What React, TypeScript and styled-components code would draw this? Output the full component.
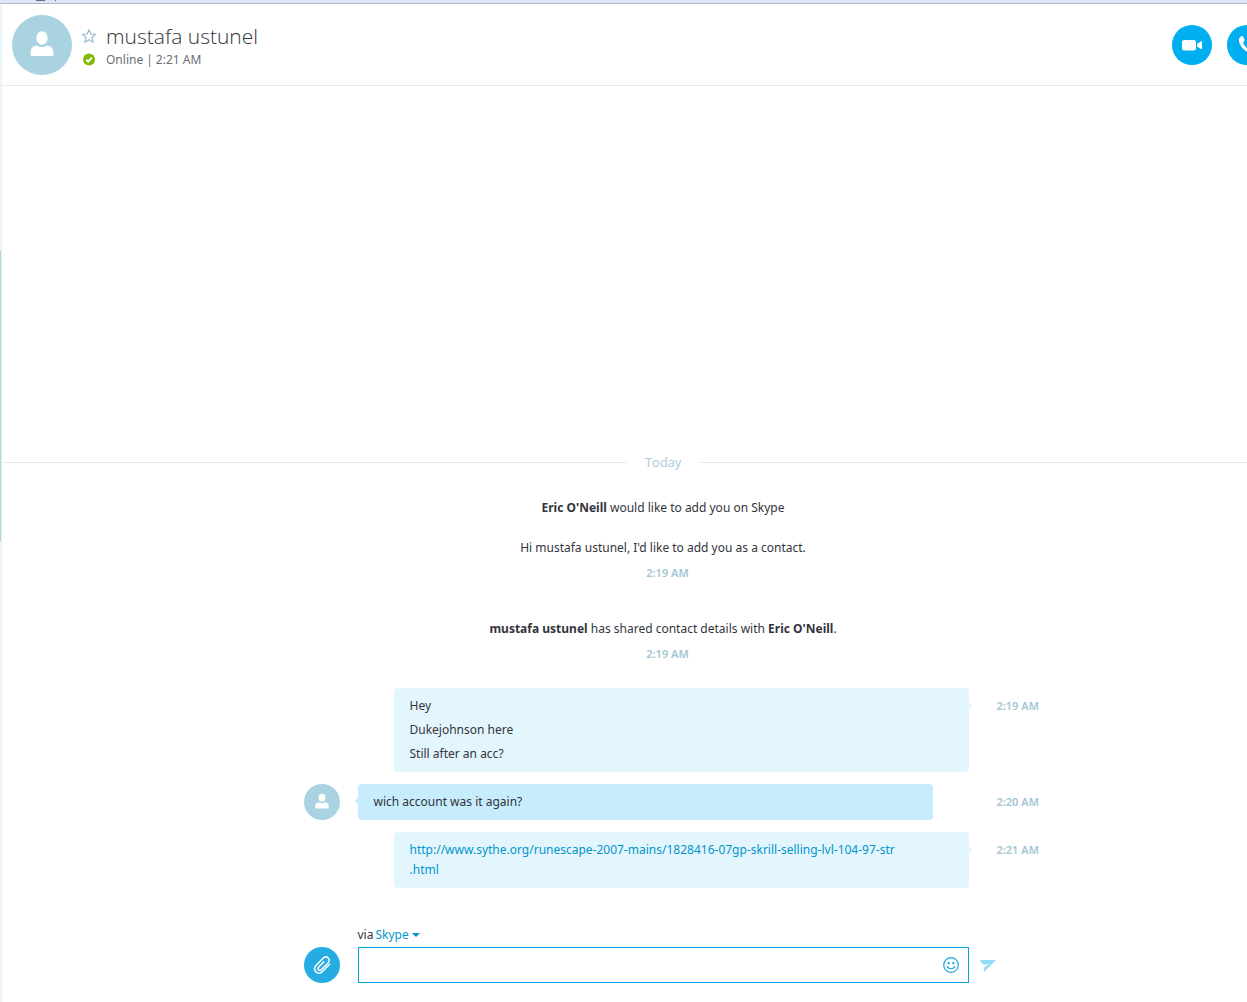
import React from "react";
import styled, { createGlobalStyle } from "styled-components";

const GlobalStyle = createGlobalStyle`
  *, *::before, *::after { box-sizing: border-box; }
  body {
    margin: 0;
    background: #fff;
    color: #34343c;
    font-family: "Noto Sans", "Open Sans", sans-serif;
    font-size: 12px;
    line-height: 20px;
    overflow: hidden;
  }
  button, input { font: inherit; color: inherit; }
  p { margin: 0; }
`;

const Screen = styled.div`
  display: flex;
  flex-direction: column;
  height: 100vh;
  overflow: hidden;
`;

const WindowEdge = styled.div`
  flex: none;
  display: flex;
  align-items: flex-start;
  gap: 10px;
  height: 4px;
  padding-left: 36px;
  background: #dfe5f7;
  border-bottom: 1px solid #b4b8cc;
`;

const EdgeMark = styled.span<{ $width: number }>`
  width: ${(p) => p.$width}px;
  height: 1px;
  background: #6b6b75;
`;

const Body = styled.div`
  flex: 1;
  display: flex;
  min-height: 0;
  padding-top: 1px;
`;

const Rail = styled.div`
  flex: none;
  display: flex;
  flex-direction: column;
  width: 2px;
  padding-top: 246px;
  background: #eef9fd;
  border-right: 1px solid #e2eef2;
`;

const RailThumb = styled.div`
  height: 290px;
  background: #b5d3df;
`;

const Panel = styled.main`
  flex: none;
  display: flex;
  flex-direction: column;
  width: calc(100% + 75px);
`;

const Header = styled.header`
  flex: none;
  display: flex;
  align-items: center;
  height: 81px;
  padding: 0 57px 0 10px;
  border-bottom: 1px solid #e6ecee;
`;

const Avatar = styled.div<{ $size: number }>`
  flex: none;
  width: ${(p) => p.$size}px;
  height: ${(p) => p.$size}px;
  border-radius: 50%;
  background: #a9d3e1;
  svg { display: block; width: 100%; height: 100%; }
`;

const Identity = styled.div`
  flex: 1;
  display: grid;
  grid-template-columns: 14px 1fr;
  column-gap: 10px;
  align-items: center;
  margin-left: 10px;
  padding-top: 2px;
`;

const StarButton = styled.button`
  padding: 0;
  border: 0;
  background: none;
  svg { display: block; }
`;

const Name = styled.h1`
  margin: 0;
  font-family: "Open Sans", "Noto Sans", sans-serif;
  font-size: 21px;
  font-weight: 300;
  line-height: 28px;
`;

const Status = styled.p`
  display: flex;
  gap: 3px;
  color: #6e6e76;
`;

const Calls = styled.div`
  display: flex;
  gap: 15px;
`;

const RoundButton = styled.button<{ $size: number; $color: string }>`
  flex: none;
  width: ${(p) => p.$size}px;
  height: ${(p) => p.$size}px;
  padding: 0;
  border: 0;
  border-radius: 50%;
  background: ${(p) => p.$color};
  svg { display: block; width: 100%; height: 100%; }
`;

const History = styled.section`
  flex: 1;
  display: flex;
  flex-direction: column;
  justify-content: flex-end;
  min-height: 0;
`;

const DayDivider = styled.div`
  display: flex;
  align-items: center;
  gap: 18px;
  margin-bottom: 26px;
  color: #a9cbdb;
  font-family: "Open Sans", "Noto Sans", sans-serif;
  font-size: 13px;
  &::before, &::after {
    content: "";
    flex: 1;
    height: 1px;
    background: #e6ecee;
  }
`;

const Notice = styled.div`
  display: flex;
  flex-direction: column;
  align-items: center;
  margin-bottom: 36px;
`;

const NoticeText = styled.p`
  & + & { margin-top: 20px; }
`;

const Time = styled.time`
  color: #a3c5d4;
  font-size: 11px;
  font-weight: 600;
`;

const NoticeTime = styled(Time)`
  margin-top: 5px;
  padding-left: 9px;
`;

const Messages = styled.div`
  display: grid;
  gap: 12px;
  margin: -12px 0 37px;
`;

const Row = styled.div`
  display: grid;
  grid-template-columns: 1fr 611px 1fr;
`;

const Left = styled.div`
  display: flex;
  justify-content: flex-end;
  padding-right: 18px;
`;

const Right = styled.div`
  padding: 8px 0 0 28px;
`;

const Bubble = styled.div<{ $mine?: boolean }>`
  position: relative;
  width: 575px;
  margin-left: ${(p) => (p.$mine ? "36px" : "0")};
  padding: 6px 48px 6px 16px;
  border-radius: 4px;
  background: ${(p) => (p.$mine ? "#e4f6fd" : "#c7ecfb")};
  &::after {
    content: "";
    position: absolute;
    top: 14px;
    ${(p) => (p.$mine ? "right" : "left")}: -2px;
    width: 6px;
    height: 6px;
    background: inherit;
    transform: rotate(45deg);
  }
`;

const Line = styled.p`
  padding: 2px 0;
`;

const Link = styled.a`
  color: #0095cc;
  text-decoration: none;
`;

const Composer = styled.form`
  flex: none;
  padding-bottom: 19px;
`;

const Via = styled.div`
  height: 22px;
  display: flex;
  align-items: flex-start;
  gap: 2px;
`;

const ViaButton = styled.button`
  display: flex;
  align-items: center;
  gap: 3px;
  padding: 0;
  border: 0;
  background: none;
  color: #0095cc;
`;

const Field = styled.div`
  display: flex;
  align-items: center;
  height: 36px;
  padding-right: 9px;
  border: 1px solid #00a4e4;
`;

const TextBox = styled.input`
  flex: 1;
  height: 100%;
  padding: 0 15px;
  border: 0;
  outline: 0;
  background: none;
`;

const IconButton = styled.button`
  padding: 0;
  border: 0;
  background: none;
  svg { display: block; }
`;

const Send = styled.div`
  display: flex;
  align-items: center;
  padding: 2px 0 0 11px;
`;

const Person = () => (
  <svg viewBox="0 0 60 60" fill="#fff" aria-hidden="true">
    <ellipse cx="30" cy="23" rx="5.7" ry="6.700" />
    <path d="M18.700 41v-3.600c0-4.200 2.200-6.400 6.200-6.900 3.200 2 7 2 10.200 0 4 .5 6.200 2.700 6.200 6.900v3.600z" />
  </svg>
);

const Star = () => (
  <svg width="14" height="14" viewBox="0 0 14 14" fill="none" stroke="#94bfd1" strokeWidth="1.200" strokeLinejoin="round" aria-hidden="true">
    <path d="M7 .7l1.800 4.300 4.700.4-3.600 3.100 1.200 4.700L7 10.700l-4.100 2.500 1.200-4.700L.5 5.400 5.200 5z" />
  </svg>
);

const Online = () => (
  <svg width="14" height="14" viewBox="0 0 14 14" aria-hidden="true">
    <circle cx="7" cy="6.500" r="6" fill="#7fba00" />
    <path d="M4.200 6.700l2 1.900 3.700-4" fill="none" stroke="#fff" strokeWidth="2" />
  </svg>
);

const Video = () => (
  <svg viewBox="0 0 40 40" fill="#fff" aria-hidden="true">
    <rect x="10" y="15" width="14" height="10.500" rx="2" />
    <path d="M25 19l4-2.700q1-.4 1 .6v6.600q0 1-1 .6l-4-2.700z" />
  </svg>
);

const Phone = () => (
  <svg viewBox="0 0 40 40" fill="#fff" aria-hidden="true">
    <path d="M12.200 13.500c.7-1.800 2.500-3 3.500-2.300.8.6 1.700 2.700 1.900 3.900.2 1.300-1.400 1.800-1.300 3 .2 1.900 3.800 5.700 5.800 5.900 1.200.1 1.800-1.400 3-1.200 1.200.2 3.300 1.200 3.800 2 .7 1-.6 2.800-2.400 3.400-6 2-16.300-8.500-14.300-14.700z" />
  </svg>
);

const Clip = () => (
  <svg viewBox="0 0 36 36" fill="none" stroke="#fff" strokeWidth="1.500" strokeLinecap="round" aria-hidden="true">
    <path d="M25.700 17.300l-7 7c-2 2-4.800 2.400-6.700.7-2-1.900-1.900-4.500 0-6.500l6.800-7c1.700-1.700 3.900-2 5.400-.5s1.200 3.500-.4 5.200l-6.300 6.300c-1 1-2.200 1.100-3 .4s-.7-1.900.2-2.800l5.200-5.300" />
  </svg>
);

const Smile = () => (
  <svg width="16" height="16" viewBox="0 0 16 16" fill="none" stroke="#1ba5dd" strokeWidth="1.200" aria-hidden="true">
    <circle cx="8" cy="8" r="7.300" />
    <path d="M4.200 9.200c.7 3.400 6.900 3.400 7.600 0" />
    <path d="M5.600 5v2.200M10.400 5v2.200" strokeWidth="1.900" />
  </svg>
);

const Plane = () => (
  <svg width="16" height="12" viewBox="0 0 16 12" fill="#94dcf8" aria-hidden="true">
    <path d="M0 0h16L4 12V7.500L9 3.800 4 4.800 1 2.500z" />
  </svg>
);

const Caret = () => (
  <svg width="8" height="4" viewBox="0 0 8 4" fill="#0095cc" aria-hidden="true">
    <path d="M0 0h8L4 4z" />
  </svg>
);

export default function App() {
  return (
    <Screen>
      <GlobalStyle />
      <WindowEdge>
        <EdgeMark $width={9} />
        <EdgeMark $width={1} />
      </WindowEdge>
      <Body>
        <Rail>
          <RailThumb />
        </Rail>
        <Panel>
          <Header>
            <Avatar $size={60}>
              <Person />
            </Avatar>
            <Identity>
              <StarButton aria-label="Add to favorites">
                <Star />
              </StarButton>
              <Name>mustafa ustunel</Name>
              <Online />
              <Status>
                <span>Online</span>
                <span>|</span>
                <span>2:21 AM</span>
              </Status>
            </Identity>
            <Calls>
              <RoundButton $size={40} $color="#00aff0" aria-label="Video call">
                <Video />
              </RoundButton>
              <RoundButton $size={40} $color="#00aff0" aria-label="Call">
                <Phone />
              </RoundButton>
            </Calls>
          </Header>

          <History>
            <DayDivider>Today</DayDivider>
            <Notice>
              <NoticeText>
                <b>Eric O'Neill</b> would like to add you on Skype
              </NoticeText>
              <NoticeText>Hi mustafa ustunel, I'd like to add you as a contact.</NoticeText>
              <NoticeTime>2:19 AM</NoticeTime>
            </Notice>
            <Notice>
              <NoticeText>
                <b>mustafa ustunel</b> has shared contact details with <b>Eric O'Neill</b>.
              </NoticeText>
              <NoticeTime>2:19 AM</NoticeTime>
            </Notice>
            <Messages>
              <Row>
                <Left />
                <Bubble $mine>
                  <Line>Hey</Line>
                  <Line>Dukejohnson here</Line>
                  <Line>Still after an acc?</Line>
                </Bubble>
                <Right>
                  <Time>2:19 AM</Time>
                </Right>
              </Row>
              <Row>
                <Left>
                  <Avatar $size={36}>
                    <Person />
                  </Avatar>
                </Left>
                <Bubble>
                  <Line>wich account was it again?</Line>
                </Bubble>
                <Right>
                  <Time>2:20 AM</Time>
                </Right>
              </Row>
              <Row>
                <Left />
                <Bubble $mine>
                  <Line>
                    <Link href="http://www.sythe.org/runescape-2007-mains/1828416-07gp-skrill-selling-lvl-104-97-str.html">
                      http://www.sythe.org/runescape-2007-mains/1828416-07gp-skrill-selling-lvl-104-97-str
                      <wbr />
                      .html
                    </Link>
                  </Line>
                </Bubble>
                <Right>
                  <Time>2:21 AM</Time>
                </Right>
              </Row>
            </Messages>
          </History>

          <Composer onSubmit={(e) => e.preventDefault()}>
            <Row>
              <Left />
              <Via>
                via
                <ViaButton type="button">
                  Skype
                  <Caret />
                </ViaButton>
              </Via>
            </Row>
            <Row>
              <Left>
                <RoundButton type="button" $size={36} $color="#24ace3" aria-label="Attach a file">
                  <Clip />
                </RoundButton>
              </Left>
              <Field>
                <TextBox aria-label="Message" />
                <IconButton type="button" aria-label="Emoticons">
                  <Smile />
                </IconButton>
              </Field>
              <Send>
                <IconButton aria-label="Send">
                  <Plane />
                </IconButton>
              </Send>
            </Row>
          </Composer>
        </Panel>
      </Body>
    </Screen>
  );
}
